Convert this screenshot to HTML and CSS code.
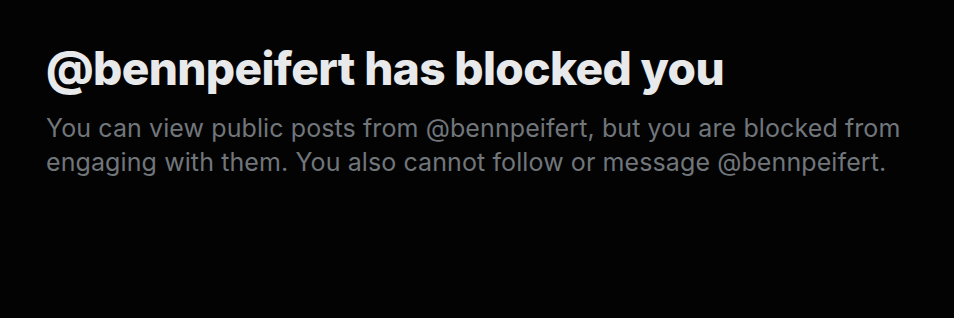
FILE: index.html
```html
<!DOCTYPE html>
<html>
<head>
<meta charset="utf-8">
<link rel="stylesheet" href="styles.css">
</head>
<body>
<main class="blocked">
  <h1 class="blocked-title">@bennpeifert has blocked you</h1>
  <p class="blocked-text">You can view public posts from @bennpeifert, but you are blocked from engaging with them. You also cannot follow or message @bennpeifert.</p>
</main>
</body>
</html>
```
FILE: styles.css
```css
html, body {
  margin: 0;
  padding: 0;
  background: #030303;
  height: 100%;
}
.blocked {
  padding: 40px 46px 0 46px;
  font-family: Inter, "Noto Sans", sans-serif;
}
.blocked-title {
  margin: 0;
  color: #e7e9ea;
  font-size: 46px;
  font-weight: 800;
  line-height: 56px;
  letter-spacing: -0.65px;
}
.blocked-text {
  margin: 15px 0 0 0;
  color: #71767b;
  font-size: 25px;
  font-weight: 400;
  line-height: 34px;
  letter-spacing: 0.1px;
  max-width: 880px;
}
```
